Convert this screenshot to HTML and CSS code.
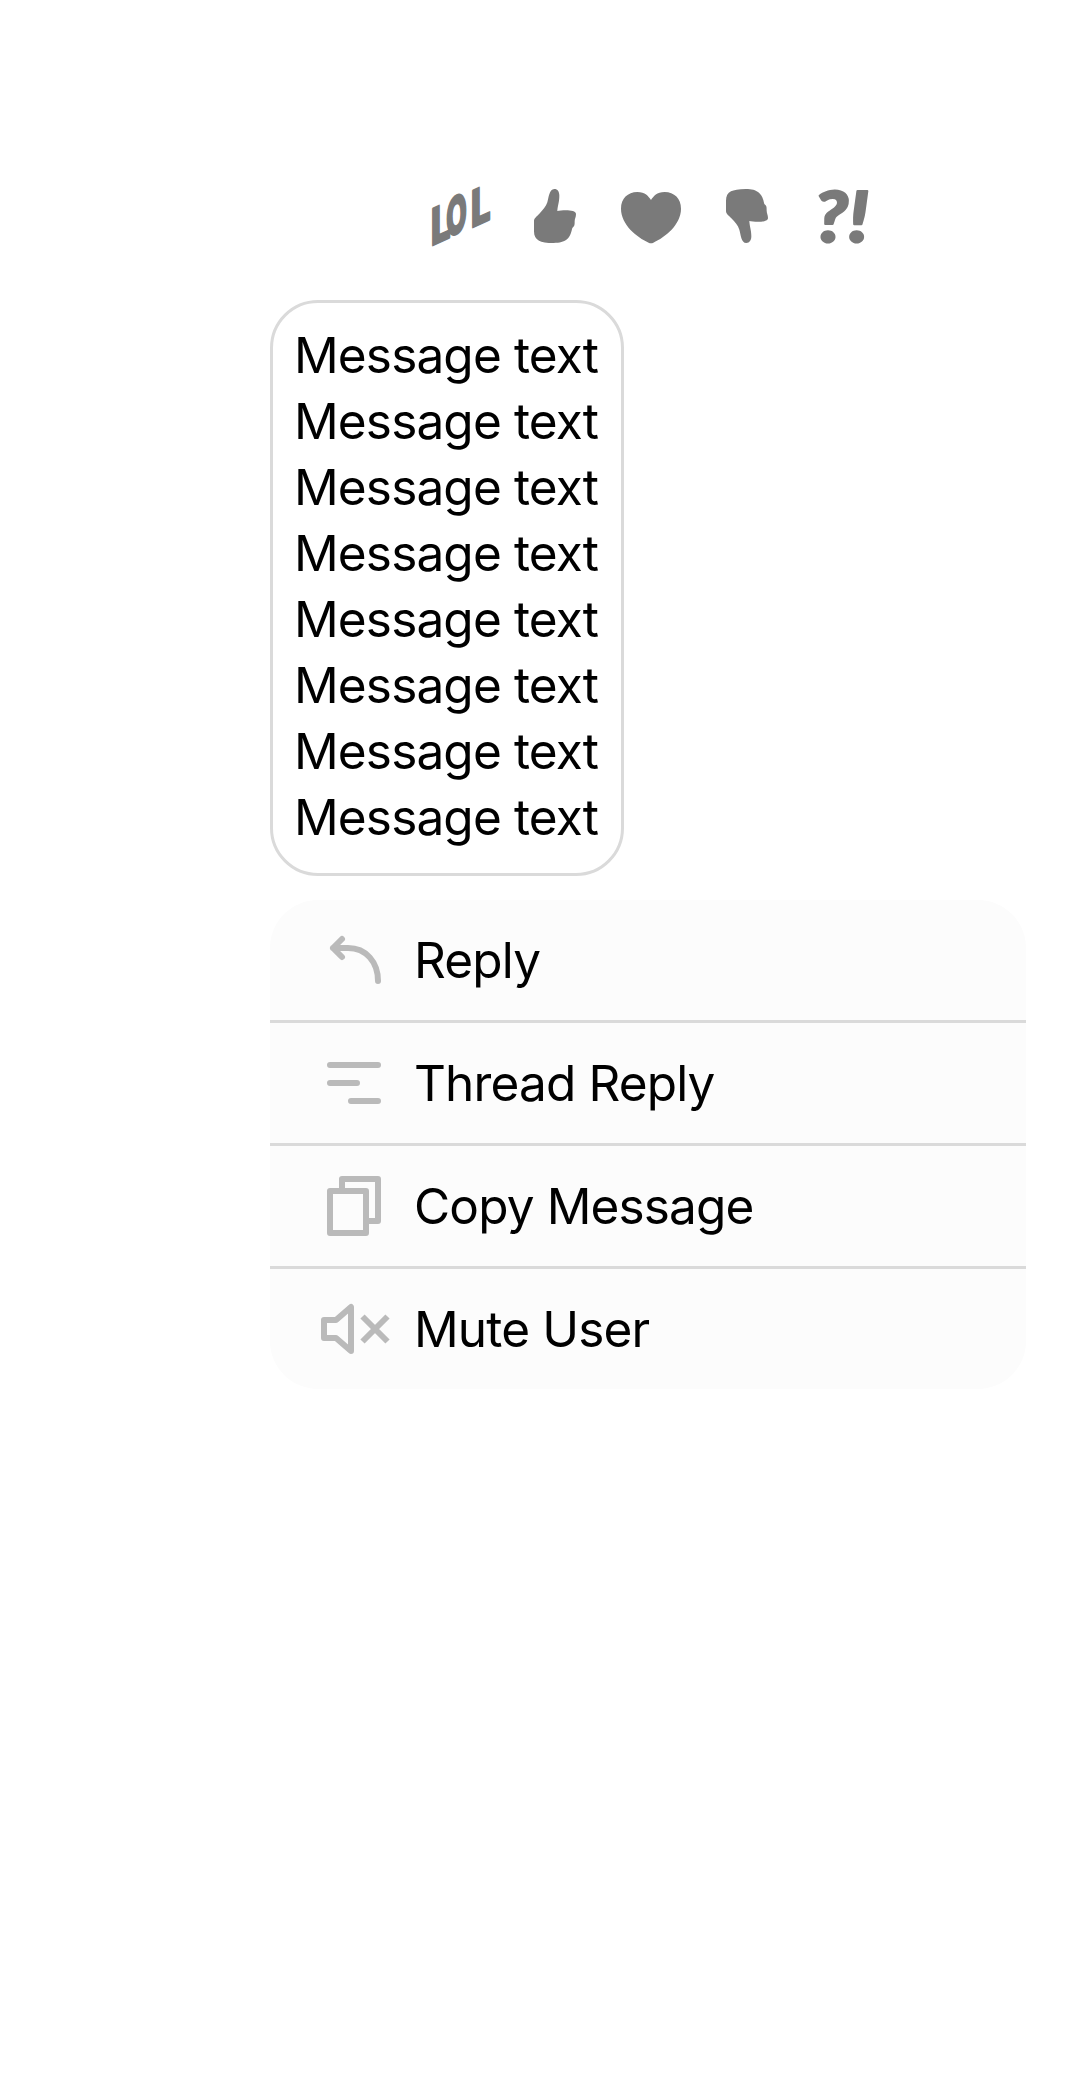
FILE: index.html
```html
<!DOCTYPE html>
<html lang="en">
<head>
<meta charset="utf-8">
<title>Message menu</title>
<link rel="stylesheet" href="styles.css">
</head>
<body>
<main class="screen">
  <div class="reactions">
    <button class="reaction" aria-label="LOL"><svg viewBox="0 0 60 60"><g class="lol"><text transform="translate(2 60) skewY(-25) scale(.69 1)">L</text><text transform="translate(17.2 52.2) skewY(-25) scale(.53 1.03)">O</text><text transform="translate(42 42) skewY(-25) scale(.69 1)">L</text></g></svg></button>
    <button class="reaction" aria-label="Like"><svg viewBox="0 0 180 180"><path d="M88 9C98 9 103 17 103 29C103 48 98 58 97 75C110 72 153 69 153 84C153 94 149 98 149 106C149 118 149 120 142 126C139 136 138 149 126 160C115 168 105 171 86 171C65 171 50 168 42 164C32 159 27 150 27 136V105C27 96 35 92 43 83C54 71 63 62 67 49C71 37 72 9 88 9Z"/></svg></button>
    <button class="reaction" aria-label="Love"><svg viewBox="0 0 180 180"><path d="M90 42C98 31 107 18 131 18C160 18 180 38 180 68C180 116 133 153 97 170Q90 173 83 170C47 153 0 116 0 68C0 38 20 18 49 18C73 18 82 31 90 42Z"/></svg></button>
    <button class="reaction" aria-label="Dislike"><svg class="flip" viewBox="0 0 180 180"><path d="M88 9C98 9 103 17 103 29C103 48 98 58 97 75C110 72 153 69 153 84C153 94 149 98 149 106C149 118 149 120 142 126C139 136 138 149 126 160C115 168 105 171 86 171C65 171 50 168 42 164C32 159 27 150 27 136V105C27 96 35 92 43 83C54 71 63 62 67 49C71 37 72 9 88 9Z"/></svg></button>
    <button class="reaction" aria-label="Question"><svg viewBox="0 0 60 60"><g class="ask"><text transform="translate(1 56) scale(1.12 1)">?</text><text transform="translate(35 56) scale(1.12 1)">!</text></g></svg></button>
  </div>
  <div class="bubble">
    <p>Message text</p><p>Message text</p><p>Message text</p><p>Message text</p>
    <p>Message text</p><p>Message text</p><p>Message text</p><p>Message text</p>
  </div>
  <ul class="menu">
    <li class="item"><svg viewBox="0 0 72 72"><path d="M24 15L15 24L24 33M15 24H30C48 24 60 38 60 57"/></svg><span>Reply</span></li>
    <li class="item"><svg viewBox="0 0 72 72"><path d="M12 18H60M12 36H39M33 54H60"/></svg><span>Thread Reply</span></li>
    <li class="item"><svg viewBox="0 0 72 72"><path class="square" d="M24 18V9H60V51H51M12 21H48V63H12Z"/></svg><span>Copy Message</span></li>
    <li class="item"><svg viewBox="0 0 72 72"><path class="square" d="M6 27H18L33 14V58L18 45H6ZM44.5 23.5L69.5 48.5M69.5 23.5L44.5 48.5"/></svg><span>Mute User</span></li>
  </ul>
</main>
</body>
</html>
```
FILE: styles.css
```css
* { box-sizing: border-box; }
body {
  margin: 0;
  background: #fff;
  color: #000;
  font: 400 49.5px/66px Inter, "Liberation Sans", sans-serif;
  letter-spacing: -.85px;
}
.screen {
  display: flex;
  flex-direction: column;
  align-items: flex-start;
  width: 1080px;
  height: 2100px;
  padding: 168px 54px 0 270px;
}
.reactions { display: flex; margin: 0 0 36px 141px; }
.reaction {
  display: flex;
  align-items: center;
  justify-content: center;
  width: 96px;
  height: 96px;
  padding: 0;
  border: 0;
  background: none;
}
.reaction svg { width: 60px; height: 60px; fill: #7a7a7a; overflow: visible; }
.flip { transform: scaleY(-1); }
.lol, .ask {
  stroke: #7a7a7a;
  stroke-width: 2.5px;
  stroke-linejoin: round;
  letter-spacing: 0;
  opacity: .999;
}
.lol { font: 800 50px Inter, sans-serif; }
.ask { font: italic 900 70px Lato, sans-serif; stroke-width: 2px; }
.bubble {
  width: 354px;
  height: 576px;
  padding: 19px 0 0 21px;
  border: 3px solid #dadada;
  border-radius: 48px;
  white-space: nowrap;
}
.bubble p { margin: 0; }
.menu {
  width: 756px;
  margin: 24px 0 0;
  padding: 0;
  list-style: none;
  background: #fcfcfc;
  border-radius: 48px;
}
.item {
  display: flex;
  align-items: center;
  gap: 24px;
  height: 120px;
  padding-left: 48px;
}
.item + .item { height: 123px; border-top: 3px solid #dadada; }
.item svg {
  width: 72px;
  height: 72px;
  fill: none;
  stroke: #bababa;
  stroke-width: 6;
  stroke-linecap: round;
  stroke-linejoin: round;
}
.item .square { stroke-linecap: butt; }
```
